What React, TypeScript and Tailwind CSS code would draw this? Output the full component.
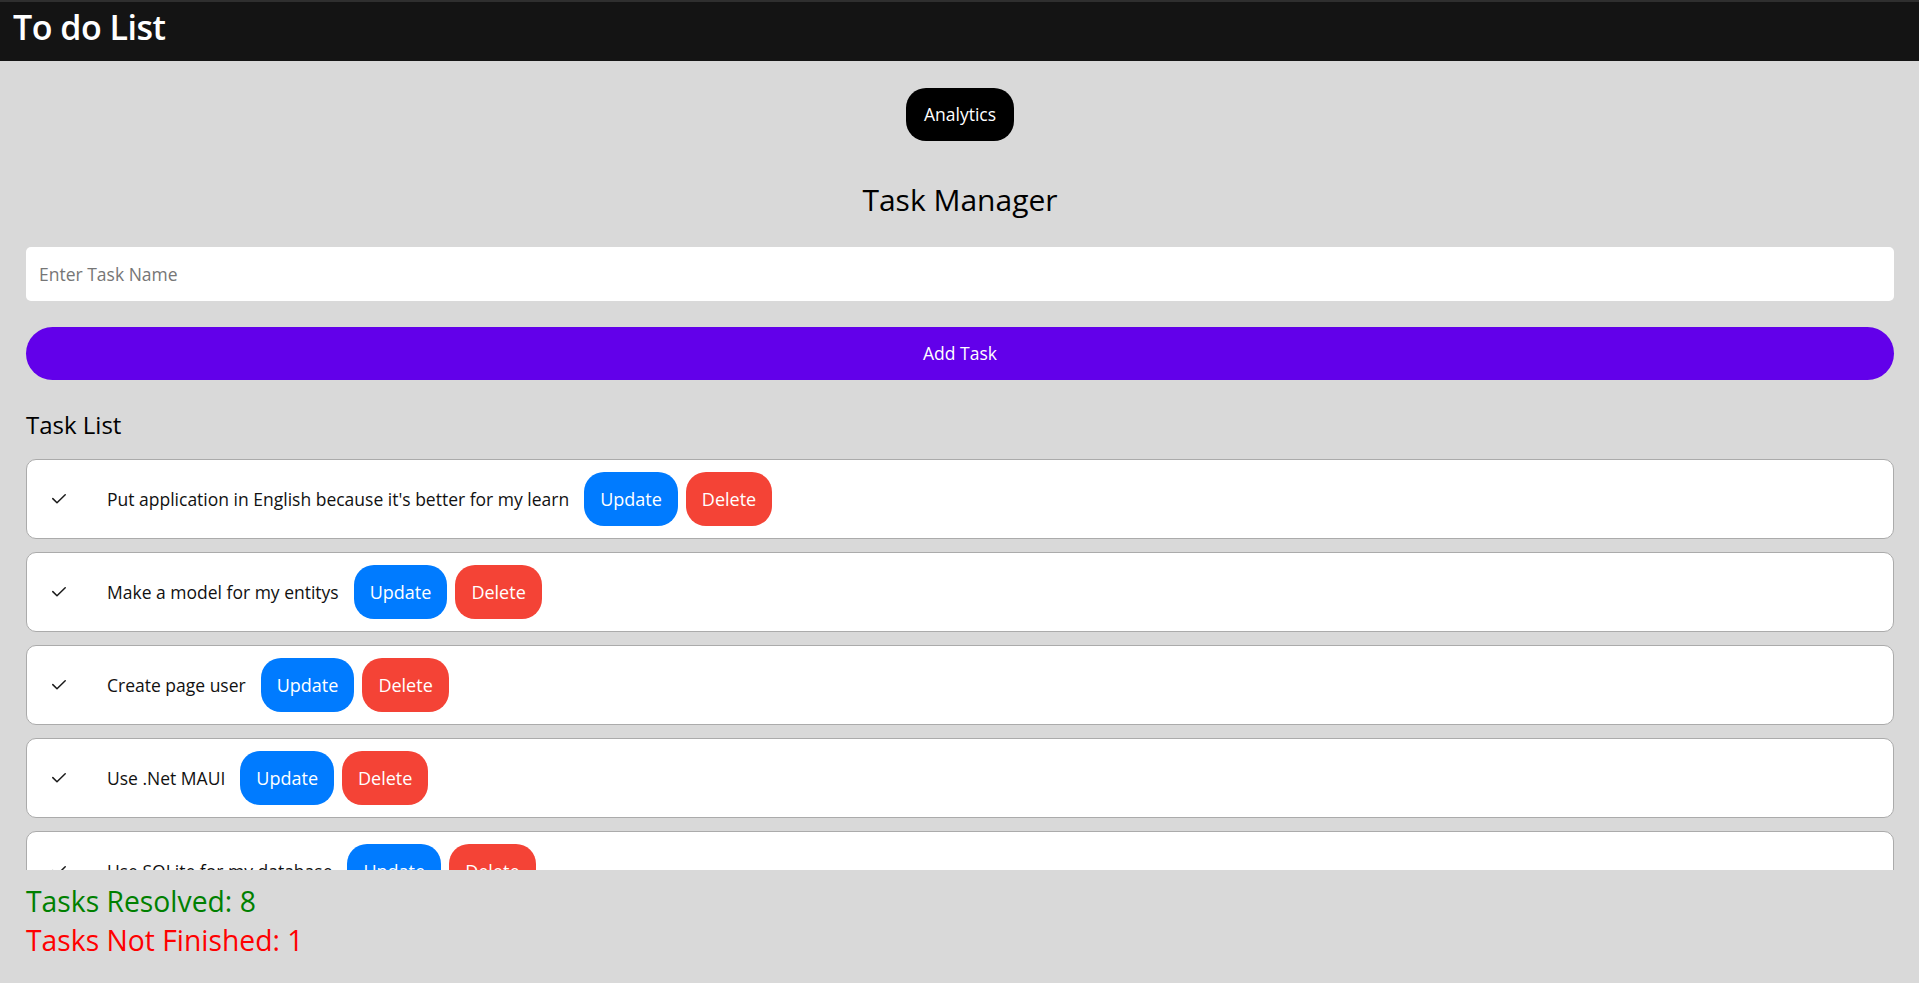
import React, { useState } from 'react';

interface Task {
  id: number;
  name: string;
  done: boolean;
}

const initialTasks: Task[] = [
  { id: 1, name: "Put application in English because it's better for my learn", done: true },
  { id: 2, name: 'Make a model for my entitys', done: true },
  { id: 3, name: 'Create page user', done: true },
  { id: 4, name: 'Use .Net MAUI', done: true },
  { id: 5, name: 'Use SQLite for my database', done: true },
  { id: 6, name: 'Create analytics page', done: true },
  { id: 7, name: 'Count resolved tasks', done: true },
  { id: 8, name: 'Style the buttons', done: true },
  { id: 9, name: 'Publish the application', done: false },
];

function CheckIcon() {
  return (
    <svg width="14" height="10" viewBox="0 0 14 10" fill="none" className="shrink-0">
      <polyline points="0.8,4.6 5,8.8 13.2,0.8" stroke="#1a1a1a" strokeWidth="1.5" strokeLinecap="round" strokeLinejoin="round" />
    </svg>
  );
}

export default function App() {
  const [tasks] = useState<Task[]>(initialTasks);
  const [name, setName] = useState('');

  const resolved = tasks.filter(t => t.done).length;
  const notFinished = tasks.length - resolved;

  return (
    <div className="h-[983px] bg-[#d9d9d9] flex flex-col overflow-hidden" style={{ fontFamily: '"Open Sans", "Noto Sans", sans-serif' }}>
      <header className="h-[61px] shrink-0 border-t-2 border-[#2f2f2f] bg-[#141414] flex items-center pl-[13px] pb-[9px]">
        <h1 className="text-white text-[34px] font-semibold leading-none tracking-[-0.5px]">To do List</h1>
      </header>

      <main className="flex-1 flex flex-col pl-[26px] pr-[25px]">
        <div className="flex justify-center mt-[27px]">
          <button className="h-[53px] px-[18px] rounded-[20px] bg-black text-white text-[17.5px]">Analytics</button>
        </div>

        <h2 className="text-center text-[30px] leading-[41px] text-black mt-[38px]">Task Manager</h2>

        <input
          value={name}
          onChange={e => setName(e.target.value)}
          placeholder="Enter Task Name"
          className="mt-[27px] h-[54px] w-full rounded-[5px] bg-white px-[13px] text-[17.5px] text-black placeholder:text-[#767676] outline-none"
        />

        <button className="mt-[26px] h-[53px] w-full rounded-full bg-[#6200ea] text-white text-[17.5px]">Add Task</button>

        <h3 className="mt-[28px] text-[24px] leading-[33px] text-black">Task List</h3>

        <div className="mt-[18px] h-[411px] shrink-0 overflow-hidden flex flex-col gap-[13px]">
          {tasks.map(task => (
            <div key={task.id} className="h-[80px] shrink-0 bg-white border border-[#ababab] rounded-[10px] flex items-center pl-[25px]">
              <CheckIcon />
              <span className="ml-[41px] text-[17.5px] text-[#111]">{task.name}</span>
              <button className="ml-[15px] h-[54px] px-[16px] rounded-[20px] bg-[#007bff] text-white text-[18px]">Update</button>
              <button className="ml-[8px] h-[54px] px-[16px] rounded-[20px] bg-[#f44336] text-white text-[18px]">Delete</button>
            </div>
          ))}
        </div>

        <div className="mt-[12px] text-[28.3px] leading-[39px]">
          <p className="text-[#008000]">Tasks Resolved: {resolved}</p>
          <p className="text-[#ff0000]">Tasks Not Finished: {notFinished}</p>
        </div>
      </main>
    </div>
  );
}
